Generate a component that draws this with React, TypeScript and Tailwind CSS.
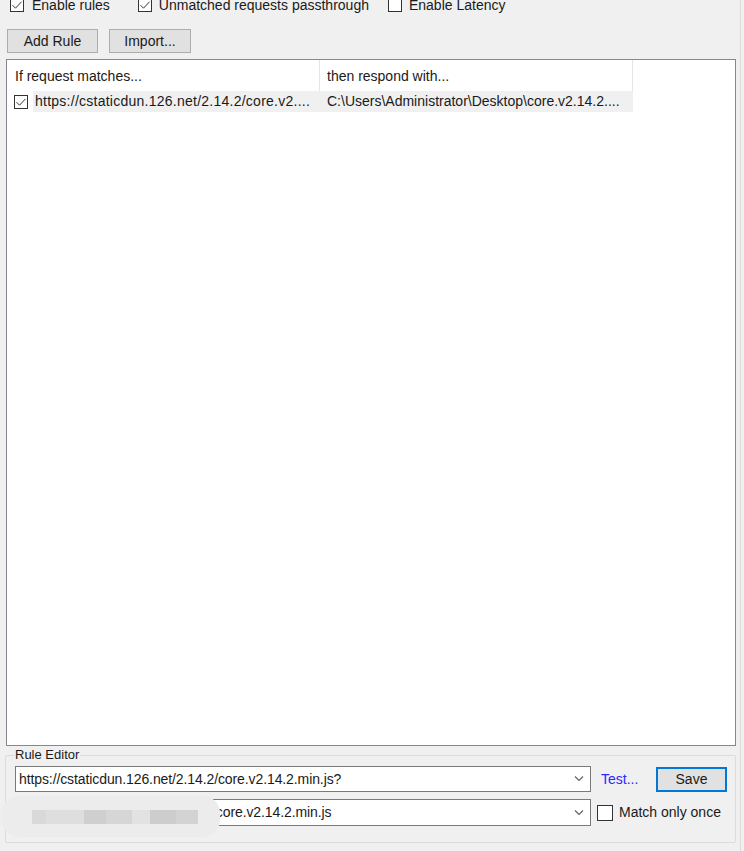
import React from 'react';

const font = { fontFamily: '"Liberation Sans", Arial, sans-serif' };

const Check = ({ checked }: { checked?: boolean }) => (
  <span className="inline-flex h-[14px] w-[14px] shrink-0 items-center justify-center border border-[#333333] bg-white">
    {checked && (
      <svg width="12" height="12" viewBox="0 0 12 12">
        <path d="M1.5 6.2 L4.5 9.2 L10.5 2.8" fill="none" stroke="#333" strokeWidth="1" />
      </svg>
    )}
  </span>
);

const Chevron = () => (
  <svg width="10" height="6" viewBox="0 0 10 6" className="shrink-0">
    <path d="M1 0.5 L5 4.5 L9 0.5" fill="none" stroke="#606060" strokeWidth="1.1" />
  </svg>
);

const App = () => {
  return (
    <div className="relative flex h-[851px] w-[744px] flex-col overflow-hidden bg-[#f0f0f0] text-[14px] text-[#1a1a1a]" style={font}>
      {/* window edge */}
      <div className="absolute right-[3px] top-0 h-full w-px bg-[#dadada]" />

      {/* Options */}
      <div className="mt-[-2px] flex h-[14px] items-center pl-[10px]">
        <label className="flex items-center gap-[8px]">
          <Check checked />
          <span>Enable rules</span>
        </label>
        <label className="ml-[28px] flex items-center gap-[7px]">
          <Check checked />
          <span>Unmatched requests passthrough</span>
        </label>
        <label className="ml-[19px] flex items-center gap-[7px]">
          <Check />
          <span>Enable Latency</span>
        </label>
      </div>

      {/* Buttons */}
      <div className="mt-[17px] flex gap-[11px] pl-[7px]">
        <button className="h-[24px] w-[91px] border border-[#adadad] bg-[#e1e1e1]">Add Rule</button>
        <button className="h-[24px] w-[82px] border border-[#adadad] bg-[#e1e1e1]">Import...</button>
      </div>

      {/* Rules list */}
      <div className="ml-[6px] mt-[6px] h-[687px] w-[730px] border border-[#828790] bg-white">
        <div className="flex h-[31px] w-[626px]">
          <div className="flex w-[313px] items-center border-r border-[#e5e5e5] pl-[8px] pt-[1px]">If request matches...</div>
          <div className="flex w-[313px] items-center border-r border-[#e5e5e5] pl-[7px] pt-[1px]">then respond with...</div>
        </div>
        <div className="flex h-[21px] w-[626px] items-center">
          <div className="flex w-[26px] justify-center pl-[1px]">
            <Check checked />
          </div>
          <div className="flex h-full w-[287px] items-center bg-[#f0f0f0] pl-[2px] tracking-[0.25px]">https://cstaticdun.126.net/2.14.2/core.v2....</div>
          <div className="flex h-full w-[313px] items-center bg-[#f0f0f0] pl-[7px]">C:\Users\Administrator\Desktop\core.v2.14.2....</div>
        </div>
      </div>

      {/* Rule Editor */}
      <div className="relative ml-[5px] mt-[9px] h-[88px] w-[731px] rounded-[2px] border border-[#dcdcdc]">
        <span className="absolute left-[8px] top-[-8px] bg-[#f0f0f0] px-[1px] text-[13px] leading-[14px]">Rule Editor</span>
        <div className="mt-[10px] flex items-center pl-[9px]">
          <div className="flex h-[26px] w-[576px] items-center justify-between border border-[#7a7a7a] bg-white pl-[3px] pr-[6px] tracking-[-0.1px]">
            <span>https://cstaticdun.126.net/2.14.2/core.v2.14.2.min.js?</span>
            <Chevron />
          </div>
          <span className="ml-[10px] w-[40px] text-[#2828ff]">Test...</span>
          <button className="ml-[15px] h-[25px] w-[71px] border-2 border-[#0078d7] bg-[#e1e1e1]">Save</button>
        </div>
        <div className="relative mt-[7px] flex items-center pl-[9px]">
          <div className="flex h-[27px] w-[576px] items-center justify-between border border-[#7a7a7a] bg-white pl-[3px] pr-[6px] tracking-[-0.1px]">
            <span>C:\Users\Administrator\Desktop\core.v2.14.2.min.js</span>
            <Chevron />
          </div>
          <label className="ml-[6px] flex items-center gap-[6px]">
            <span className="h-[16px] w-[16px] border border-[#333333] bg-white" />
            <span>Match only once</span>
          </label>
          {/* mosaic blur over the path */}
          <div className="absolute left-[-6px] top-[-3px] flex h-[41px] w-[220px] flex-col justify-center overflow-hidden rounded-l-[24px] rounded-r-[20px] bg-[#ececec]">
            <div className="ml-[32px] flex h-[14px]">
              <div className="w-[14px] bg-[#d9d9d9]" />
              <div className="w-[38px] bg-[#dedede]" />
              <div className="w-[22px] bg-[#cfcfcf]" />
              <div className="w-[26px] bg-[#d6d6d6]" />
              <div className="w-[18px] bg-[#e2e2e2]" />
              <div className="w-[26px] bg-[#cdcdcd]" />
              <div className="w-[22px] bg-[#d3d3d3]" />
            </div>
          </div>
        </div>
      </div>
    </div>
  );
};

export default App;
